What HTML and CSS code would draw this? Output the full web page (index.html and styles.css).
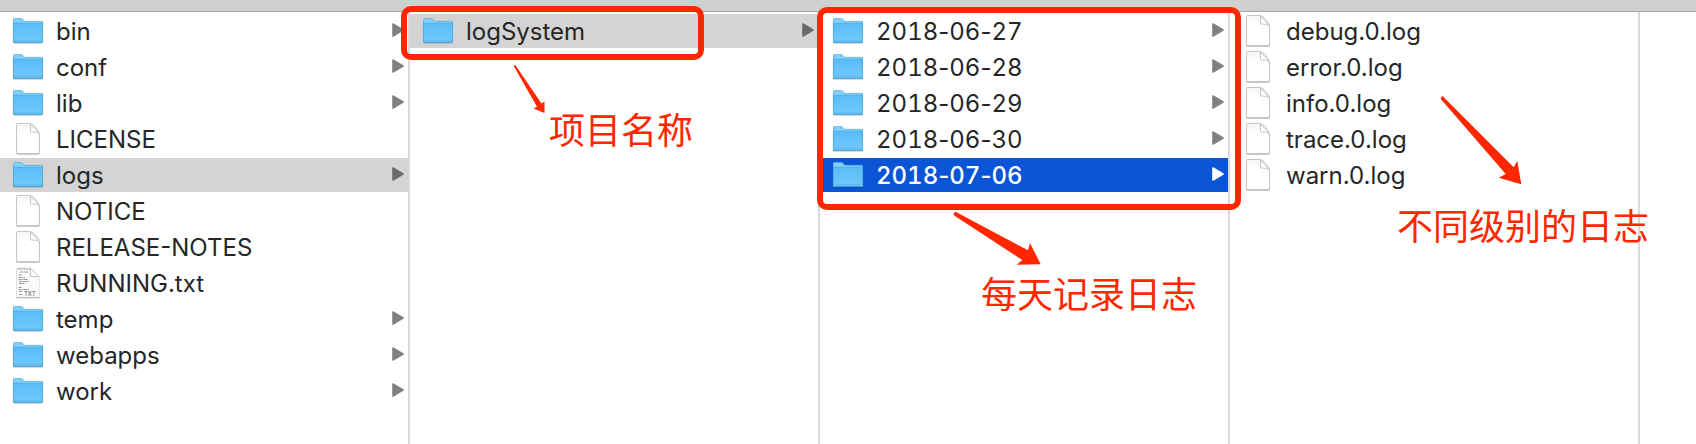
FILE: index.html
```html
<!DOCTYPE html>
<html lang="zh-CN">

<head>
    <meta charset="UTF-8">
    <meta name="viewport" content="width=device-width, initial-scale=1.0">
    <title>logs</title>
    <link rel="stylesheet" href="styles.css">
</head>

<body>

    <!-- shared icons -->
    <svg class="defs" width="0" height="0" aria-hidden="true">
        <defs>
            <linearGradient id="folder-front" x1="0" y1="0" x2="0" y2="1">
                <stop offset="0" stop-color="#59bcf7" />
                <stop offset="1" stop-color="#72caff" />
            </linearGradient>
            <linearGradient id="page-shade" x1="0" y1="0" x2="0" y2="1">
                <stop offset="0" stop-color="#f4f4f4" />
                <stop offset="0.3" stop-color="#ffffff" />
            </linearGradient>
        </defs>
        <symbol id="folder" viewBox="0 0 32 26">
            <path d="M1.5 25.3h29" stroke="#000" stroke-opacity="0.18" />
            <path d="M1 1.5Q1 0.5 2 0.5H9.2Q10 0.5 10.8 1.3L12.2 2.8Q12.7 3.3 13.5 3.3H30Q31 3.3 31 4.3V24.5H1Z" fill="#83d0fb" />
            <path d="M1.5 5V1.7Q1.5 0.6 2.5 0.6H9.2Q10 0.6 10.8 1.4L12.2 2.9Q12.7 3.4 13.5 3.4H30.5" fill="none" stroke="#62b0dc" stroke-width="0.8" />
            <path d="M1 5H31V23.5Q31 24.5 30 24.5H2Q1 24.5 1 23.5Z" fill="url(#folder-front)" />
            <path d="M1 5.2H31" stroke="#55aee2" stroke-width="0.8" />
            <path d="M1.4 5V24M30.6 4V24" stroke="#4fa5d8" stroke-width="0.8" />
            <path d="M2 22.4H30" stroke="#5bb8ee" stroke-width="0.7" />
            <path d="M1.3 24.3H30.7" stroke="#4796c4" />
        </symbol>
        <symbol id="page" viewBox="0 0 26 32">
            <path d="M1.5 1.5Q1.5 0.5 2.5 0.5H14Q17 0.5 19 2.5L22.5 6.5Q24.5 8.7 24.5 12V30.5Q24.5 31 24 31H2Q1.5 31 1.5 30.5Z" fill="url(#page-shade)" stroke="#c6c6c6" />
            <path d="M1.5 31H24.5" stroke="#adadad" />
            <path d="M15.5 1V8.5Q15.5 9 16 9L22 9.2Q24 9.5 24.4 12" fill="#fff" stroke="#c4c4c4" />
            <path d="M15.5 1.5L23 8.5" stroke="#c4c4c4" />
        </symbol>
        <symbol id="arrow" viewBox="0 0 12 14">
            <path d="M1 1L11 7L1 13Z" fill="currentColor" stroke="currentColor" stroke-width="1.6" stroke-linejoin="round" />
        </symbol>
    </svg>

    <div class="toolbar"></div>

    <main class="columns">
        <ul class="column">
            <li><a href="#" class="item"><svg class="folder"><use href="#folder" /></svg><span>bin</span><svg class="arrow"><use href="#arrow" /></svg></a></li>
            <li><a href="#" class="item"><svg class="folder"><use href="#folder" /></svg><span>conf</span><svg class="arrow"><use href="#arrow" /></svg></a></li>
            <li><a href="#" class="item"><svg class="folder"><use href="#folder" /></svg><span>lib</span><svg class="arrow"><use href="#arrow" /></svg></a></li>
            <li><a href="#" class="item"><svg class="page"><use href="#page" /></svg><span>LICENSE</span></a></li>
            <li><a href="#" class="item open"><svg class="folder"><use href="#folder" /></svg><span>logs</span><svg class="arrow"><use href="#arrow" /></svg></a></li>
            <li><a href="#" class="item"><svg class="page"><use href="#page" /></svg><span>NOTICE</span></a></li>
            <li><a href="#" class="item"><svg class="page"><use href="#page" /></svg><span>RELEASE-NOTES</span></a></li>
            <li>
                <a href="#" class="item">
                    <svg class="page" viewBox="0 0 26 32">
                        <path d="M1.5 1H15L24.5 10V30.5H1.5Z" fill="#fafafa" stroke="#e2e2e2" />
                        <path d="M1.5 30.8H24.5" stroke="#adadad" />
                        <path d="M3 2H15M5 5H14M3.5 8H7M3.5 10.5H10M3.5 12.5H13M4 14.5H14M4 16.5H10M3.5 20.5H7M3.5 22.5H14M4 24.5H8M4 27.5H8" fill="none" stroke="#999" stroke-dasharray="3 0.6 1.4 0.5" />
                        <path d="M15.5 1.5V9.5H24Z" fill="#fff" stroke="#c4c4c4" />
                        <text x="9" y="29" class="txt-mark">TXT</text>
                    </svg>
                    <span>RUNNING.txt</span>
                </a>
            </li>
            <li><a href="#" class="item"><svg class="folder"><use href="#folder" /></svg><span>temp</span><svg class="arrow"><use href="#arrow" /></svg></a></li>
            <li><a href="#" class="item"><svg class="folder"><use href="#folder" /></svg><span>webapps</span><svg class="arrow"><use href="#arrow" /></svg></a></li>
            <li><a href="#" class="item"><svg class="folder"><use href="#folder" /></svg><span>work</span><svg class="arrow"><use href="#arrow" /></svg></a></li>
        </ul>

        <div class="column">
            <ul>
                <li><a href="#" class="item open"><svg class="folder"><use href="#folder" /></svg><span>logSystem</span><svg class="arrow"><use href="#arrow" /></svg></a></li>
            </ul>
            <div class="frame frame-project"></div>
            <svg class="pointer pointer-project" width="34" height="52" viewBox="0 0 34 52">
                <path d="M1 1.5Q2 0.5 3 2L28.5 39.5L31.5 37.5V49L20.5 44.5L24 42.8L1 2.5Z" />
            </svg>
            <p class="note note-project">项目名称</p>
        </div>

        <div class="column">
            <ul>
                <li><a href="#" class="item"><svg class="folder"><use href="#folder" /></svg><span class="date">2018<i>-</i>06<i>-</i>27</span><svg class="arrow"><use href="#arrow" /></svg></a></li>
                <li><a href="#" class="item"><svg class="folder"><use href="#folder" /></svg><span class="date">2018<i>-</i>06<i>-</i>28</span><svg class="arrow"><use href="#arrow" /></svg></a></li>
                <li><a href="#" class="item"><svg class="folder"><use href="#folder" /></svg><span class="date">2018<i>-</i>06<i>-</i>29</span><svg class="arrow"><use href="#arrow" /></svg></a></li>
                <li><a href="#" class="item"><svg class="folder"><use href="#folder" /></svg><span class="date">2018<i>-</i>06<i>-</i>30</span><svg class="arrow"><use href="#arrow" /></svg></a></li>
                <li><a href="#" class="item selected"><svg class="folder"><use href="#folder" /></svg><span class="date">2018<i>-</i>07<i>-</i>06</span><svg class="arrow"><use href="#arrow" /></svg></a></li>
            </ul>
            <div class="frame frame-days"></div>
            <svg class="pointer pointer-days" width="90" height="56" viewBox="0 0 90 56">
                <path d="M5 1L77 39.3L79 32L89.7 53.3L65.7 53.7L71.3 49L3.5 4.8Q2 3.5 3 2Q4 0.5 5 1Z" />
            </svg>
            <p class="note note-days">每天记录日志</p>
        </div>

        <div class="column">
            <ul>
                <li><a href="#" class="item"><svg class="page"><use href="#page" /></svg><span>debug.0.log</span></a></li>
                <li><a href="#" class="item"><svg class="page"><use href="#page" /></svg><span>error.0.log</span></a></li>
                <li><a href="#" class="item"><svg class="page"><use href="#page" /></svg><span>info.0.log</span></a></li>
                <li><a href="#" class="item"><svg class="page"><use href="#page" /></svg><span>trace.0.log</span></a></li>
                <li><a href="#" class="item"><svg class="page"><use href="#page" /></svg><span>warn.0.log</span></a></li>
            </ul>
            <svg class="pointer pointer-levels" width="84" height="92" viewBox="0 0 84 92">
                <path d="M4 1.4L74.7 72.3L78.3 66L82.3 89.3L59.7 82.7L66.7 79L2.2 4.6Q1.4 3 2.3 1.8Q3.2 0.9 4 1.4Z" />
            </svg>
            <p class="note note-levels">不同级别的日志</p>
        </div>

        <div class="column"></div>
    </main>

</body>

</html>
```
FILE: styles.css
```css
body {
    font-family: Inter, 'Noto Sans CJK SC', sans-serif;
    background-color: #fff;
    color: #262626;
    margin: 0;
    min-height: 100vh;
    display: flex;
    flex-direction: column;
    overflow-x: hidden;
}

ul {
    list-style: none;
    margin: 0;
    padding: 0;
}

.defs {
    position: absolute;
}

.toolbar {
    height: 11px;
    background-color: #d0d0d0;
    border-bottom: 1px solid #a6a6a6;
}

.columns {
    flex: 1;
    display: grid;
    grid-template-columns: repeat(4, minmax(0, 410fr)) minmax(0, 56fr);
}

.column {
    position: relative;
    padding-top: 2px;
    border-right: 2px solid #d9d9d9;
}

.column:last-child {
    border-right: none;
}

.item {
    display: flex;
    align-items: center;
    height: 34px;
    margin-bottom: 2px;
    padding: 0 4px 0 12px;
    font-size: 24px;
    line-height: 32px;
    color: inherit;
    text-decoration: none;
}

.item span {
    flex: 1;
    margin-left: 12px;
    padding-top: 2px;
}

.item.open {
    background-color: #d4d4d4;
}

.item.selected {
    background-color: #0a55d6;
    color: #fff;
    font-weight: 500;
}

/* digits line up, dashes keep their own width */
.date {
    font-variant-numeric: tabular-nums;
}

.date i {
    font-style: normal;
    font-variant-numeric: normal;
}

/* icons */
.folder {
    width: 32px;
    height: 26px;
}

.page {
    width: 26px;
    height: 32px;
    margin: 0 3px;
}

.arrow {
    width: 12px;
    height: 14px;
    margin-bottom: 2px;
    color: #808080;
}

.open .arrow {
    color: #6b6b6b;
}

.selected .arrow {
    color: #fff;
}

.txt-mark {
    font-size: 6px;
    fill: #555;
}

/* red notes over the columns */
.frame {
    position: absolute;
    z-index: 1;
    box-sizing: border-box;
    border: 6px solid #ff2600;
    border-radius: 10px;
    pointer-events: none;
}

.frame-project {
    top: -6px;
    left: -9px;
    width: 303px;
    height: 54px;
}

.frame-days {
    top: -5px;
    left: -3px;
    right: -13px;
    height: 203px;
}

.pointer {
    position: absolute;
    fill: #ff2600;
}

.pointer-project {
    top: 52px;
    left: 103px;
}

.pointer-days {
    top: 199px;
    left: 131px;
}

.pointer-levels {
    top: 83px;
    left: 209px;
}

.note {
    position: absolute;
    z-index: 1;
    margin: 0;
    font-size: 36px;
    line-height: 40px;
    color: #ff2600;
    white-space: nowrap;
}

.note-project {
    top: 99px;
    left: 139px;
}

.note-days {
    top: 263px;
    left: 161px;
}

.note-levels {
    top: 195px;
    left: 167px;
}
```
